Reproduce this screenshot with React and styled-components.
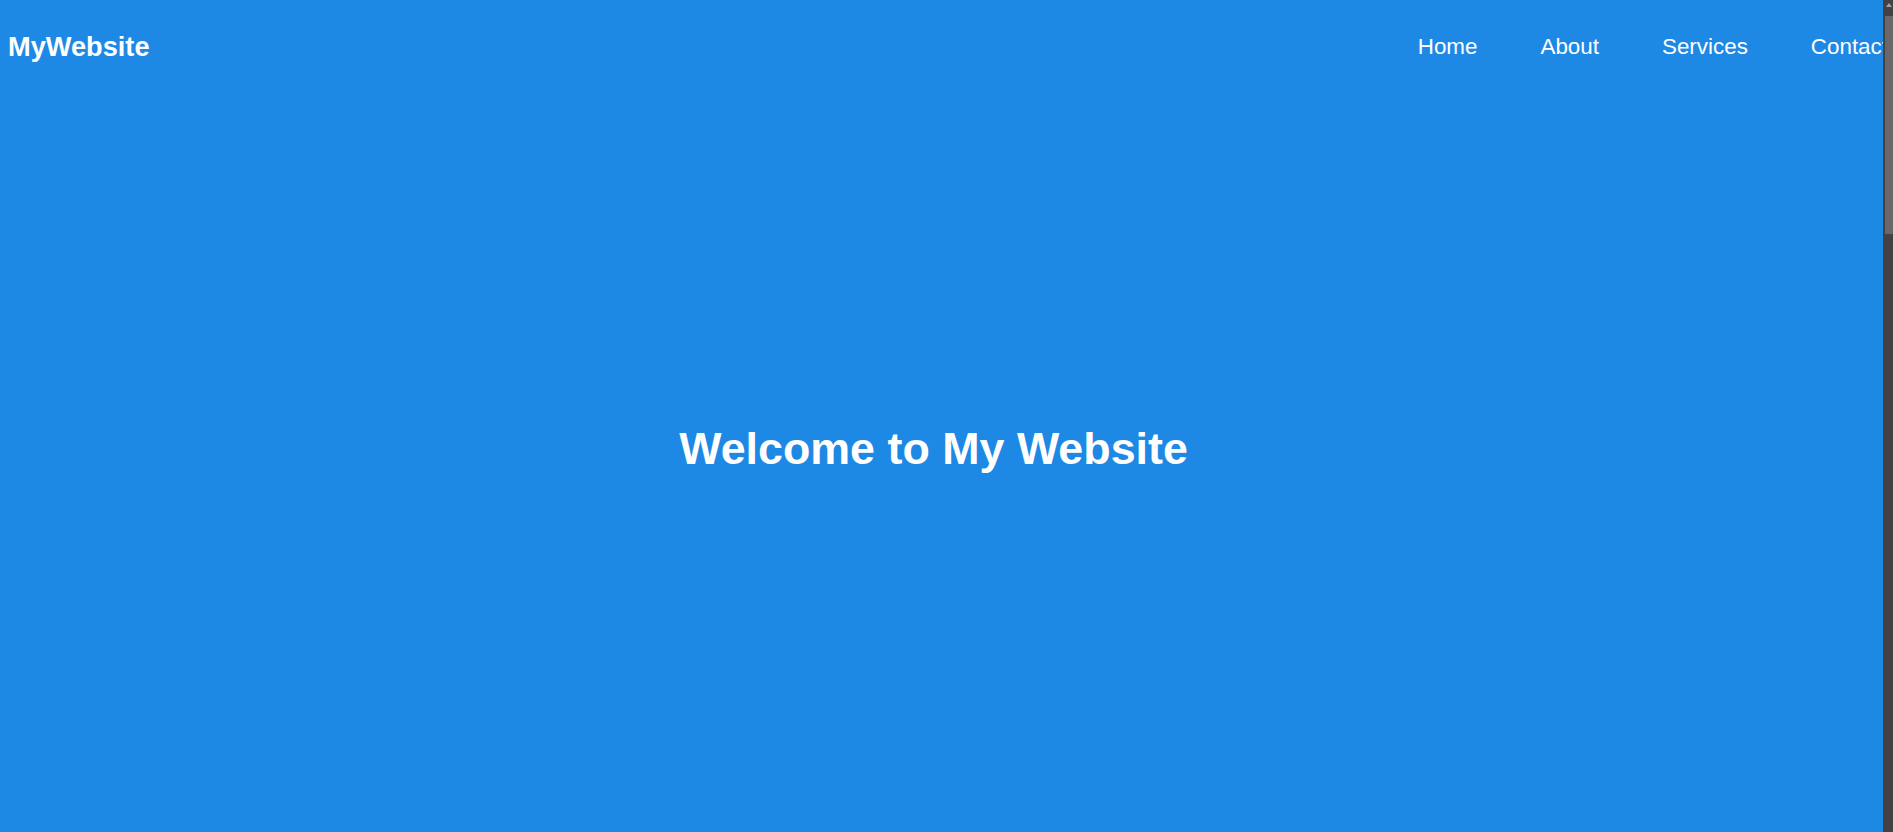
import React from 'react';
import styled, {createGlobalStyle} from 'styled-components';

const GlobalStyle = createGlobalStyle`
    body {
        margin : 0;
        background : #1e88e5;
        font-family : "Liberation Sans", Arial, sans-serif;
        color : #ffffff;
        overflow : hidden;
    }
`;

const links = ["Home", "About", "Services", "Contact"];

const App = () => {
    return (
        <>
            <GlobalStyle />
            <Frame>
                <Viewport>
                    <Header>
                        <Logo>MyWebsite</Logo>
                        <Nav>
                            {links.map(link => (
                                <NavLink key = {link} href = "#">{link}</NavLink>
                            ))}
                        </Nav>
                    </Header>
                    <Hero>
                        <HeroTitle>Welcome to My Website</HeroTitle>
                    </Hero>
                </Viewport>
                <ScrollTrack>
                    <ScrollArrow>
                        <svg width = "6" height = "4" viewBox = "0 0 6 4">
                            <path d = "M3 0 L6 4 L0 4 Z" fill = "#a3a3a3" />
                        </svg>
                    </ScrollArrow>
                    <ScrollThumb />
                </ScrollTrack>
            </Frame>
        </>
    );
}

const Frame = styled.div`
    display : flex;
    height : 100vh;
    overflow : hidden;
`;

const Viewport = styled.main`
    flex : 1;
    min-width : 0;
    overflow : hidden;
    background : #1e88e5;
`;

const Header = styled.header`
    display : flex;
    justify-content : space-between;
    align-items : center;
    height : 94px;
    padding : 0 0 0 8px;
    margin-right : -5px;
`;

const Logo = styled.div`
    font-size : 27.2px;
    font-weight : bold;
    white-space : nowrap;
`;

const Nav = styled.nav`
    display : flex;
    gap : 63px;
`;

const NavLink = styled.a`
    color : #ffffff;
    text-decoration : none;
    font-size : 22.4px;
    white-space : nowrap;
`;

const Hero = styled.section`
    display : flex;
    justify-content : center;
    align-items : center;
    height : 708px;
    padding-right : 16px;
`;

const HeroTitle = styled.h1`
    margin : 0;
    font-size : 44.8px;
    font-weight : bold;
`;

const ScrollTrack = styled.div`
    width : 10px;
    flex-shrink : 0;
    display : flex;
    flex-direction : column;
    align-items : flex-end;
    background : #424242;
`;

const ScrollArrow = styled.div`
    height : 16px;
    width : 8px;
    display : flex;
    justify-content : center;
    padding-top : 3px;
    box-sizing : border-box;
`;

const ScrollThumb = styled.div`
    width : 8px;
    height : 218px;
    background : #686868;
`;

export default App
